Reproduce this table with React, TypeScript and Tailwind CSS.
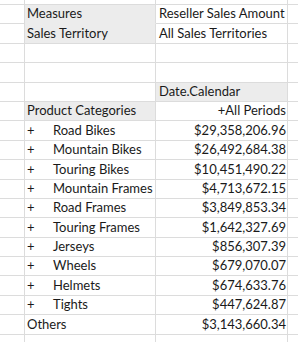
import React from 'react';

type Row = {
  b?: string;
  plus?: boolean;
  c?: string;
  grayB?: boolean;
  grayC?: boolean;
  rightC?: boolean;
  h?: string;
};

const rows: Row[] = [
  { h: 'h-[5px]' },
  { b: 'Measures', c: 'Reseller Sales Amount', grayB: true },
  { b: 'Sales Territory', c: 'All Sales Territories', grayB: true },
  {},
  {},
  { c: 'Date.Calendar', grayC: true },
  { b: 'Product Categories', c: '+All Periods', grayB: true, rightC: true },
  { b: 'Road Bikes', plus: true, c: '$29,358,206.96', rightC: true },
  { b: 'Mountain Bikes', plus: true, c: '$26,492,684.38', rightC: true },
  { b: 'Touring Bikes', plus: true, c: '$10,451,490.22', rightC: true },
  { b: 'Mountain Frames', plus: true, c: '$4,713,672.15', rightC: true },
  { b: 'Road Frames', plus: true, c: '$3,849,853.34', rightC: true },
  { b: 'Touring Frames', plus: true, c: '$1,642,327.69', rightC: true },
  { b: 'Jerseys', plus: true, c: '$856,307.39', rightC: true },
  { b: 'Wheels', plus: true, c: '$679,070.07', rightC: true },
  { b: 'Helmets', plus: true, c: '$674,633.76', rightC: true },
  { b: 'Tights', plus: true, c: '$447,624.87', rightC: true },
  { b: 'Others', c: '$3,143,660.34', rightC: true },
  { h: 'h-[10px]' },
];

export default function App() {
  return (
    <div
      className="w-[298px] h-[342px] overflow-hidden bg-white text-[#1a1a1a] text-[13px] leading-none"
      style={{ fontFamily: 'Lato, "Noto Sans", sans-serif' }}
    >
      {rows.map((r, i) => {
        const nextGrayB = rows[i + 1]?.grayB && r.grayB;
        return (
          <div key={i} className={`grid grid-cols-[25px_131px_132px_1fr] ${r.h ?? 'h-[19.4px]'}`}>
            <div className="border-r border-b border-[#dcdcdc]" />
            <div
              className={`flex items-end pb-[3px] pl-[2px] whitespace-nowrap overflow-visible border-r border-b ${
                r.grayB ? 'bg-[#ececec]' : ''
              } ${nextGrayB ? 'border-b-[#ececec]' : 'border-b-[#dcdcdc]'} border-r-[#dcdcdc]`}
            >
              {r.plus && <span className="w-[26px] shrink-0">+</span>}
              {r.b}
            </div>
            <div
              className={`flex items-end pb-[3px] whitespace-nowrap border-r border-b border-[#dcdcdc] ${
                r.grayC ? 'bg-[#ececec]' : ''
              } ${r.rightC ? 'justify-end pr-[1px]' : 'pl-[3px]'}`}
            >
              {r.c}
            </div>
            <div className="border-b border-[#dcdcdc]" />
          </div>
        );
      })}
    </div>
  );
}
